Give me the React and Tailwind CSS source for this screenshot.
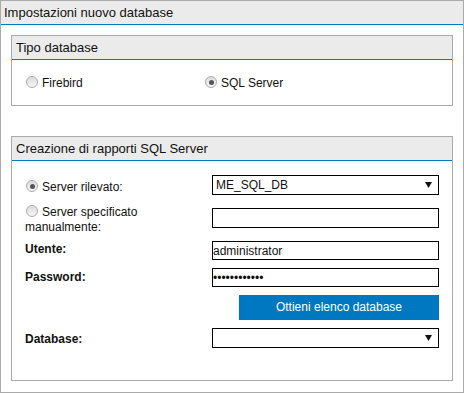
import { useState } from 'react';

function Radio({ checked }) {
  return (
    <span className="inline-flex align-top ml-[1px] mr-[4px] w-[12px] h-[12px] rounded-full border border-[#ababab] bg-gradient-to-b from-[#dcdcdc] to-[#f7f7f7] items-center justify-center">
      {checked && <span className="w-[5px] h-[5px] rounded-full bg-[#555]" />}
    </span>
  );
}

function Select({ value }) {
  return (
    <div className="relative h-full">
      <select
        className="appearance-none w-full h-full border border-black bg-white pl-[3px] text-[12px] text-[#111] outline-none"
        defaultValue={value}
      >
        <option value={value}>{value}</option>
      </select>
      <svg className="absolute right-[7px] top-1/2 -translate-y-1/2 pointer-events-none" width="7" height="6" viewBox="0 0 7 6">
        <polygon points="0,0 7,0 3.5,6" fill="#111" />
      </svg>
    </div>
  );
}

function Panel({ title, children, className = '' }) {
  return (
    <div className={`border border-[#aaaaaa] ${className}`}>
      <div className="h-[24px] bg-[#ebebeb] border-b border-[#0078c1] pl-[4px] text-[13px] leading-[23px] text-[#111]">
        {title}
      </div>
      {children}
    </div>
  );
}

export default function App() {
  const [tipo, setTipo] = useState('sql');
  const [server, setServer] = useState('rilevato');

  return (
    <div
      className="w-[464px] h-[393px] border border-[#aaaaaa] bg-white text-[#111]"
      style={{ fontFamily: '"Liberation Sans", Arial, sans-serif' }}
    >
      <div className="h-[24px] bg-[#ebebeb] border-b border-[#0078c1] pl-[3px] text-[13px] leading-[23px]">
        Impostazioni nuovo database
      </div>

      <div className="px-[10px] pt-[10px]">
        <Panel title="Tipo database">
          <div className="h-[45px] pt-[16px] pl-[13px] flex text-[12px] leading-[15px]">
            <label className="w-[179px] cursor-default" onClick={() => setTipo('firebird')}>
              <Radio checked={tipo === 'firebird'} />
              Firebird
            </label>
            <label className="cursor-default" onClick={() => setTipo('sql')}>
              <Radio checked={tipo === 'sql'} />
              SQL Server
            </label>
          </div>
        </Panel>

        <Panel title="Creazione di rapporti SQL Server" className="mt-[30px]">
          <div className="h-[219px] pl-[13px] pr-[13px] pt-[14px] text-[12px] leading-[15px]">
            <div className="flex h-[20px]">
              <label className="w-[187px] self-start mt-[5px]" onClick={() => setServer('rilevato')}>
                <Radio checked={server === 'rilevato'} />
                Server rilevato:
              </label>
              <div className="flex-1">
                <Select value="ME_SQL_DB" />
              </div>
            </div>

            <div className="flex h-[20px] mt-[13px]">
              <label className="w-[187px] pr-[12px] self-start -mt-[3px]" onClick={() => setServer('manuale')}>
                <Radio checked={server === 'manuale'} />
                Server specificato manualmente:
              </label>
              <input className="flex-1 min-w-0 h-full border border-black outline-none px-[1px] text-[12px]" />
            </div>

            <div className="flex items-center h-[19px] mt-[13px]">
              <span className="w-[187px] font-bold -mt-[2px]">Utente:</span>
              <input
                className="flex-1 min-w-0 h-full border border-black outline-none px-0 text-[12px] text-[#111]"
                defaultValue="administrator"
              />
            </div>

            <div className="flex items-center h-[19px] mt-[8px]">
              <span className="w-[187px] font-bold">Password:</span>
              <input
                type="password"
                className="flex-1 min-w-0 h-full border border-black outline-none px-0 text-[12px] text-[#111]"
                defaultValue="amministrat1"
              />
            </div>

            <div className="flex justify-end mt-[8px]">
              <button className="w-[200px] h-[25px] bg-[#0078c1] text-white text-[12px]">
                Ottieni elenco database
              </button>
            </div>

            <div className="flex items-center h-[20px] mt-[8px]">
              <span className="w-[187px] font-bold mt-[2px]">Database:</span>
              <div className="flex-1 h-full">
                <Select value="" />
              </div>
            </div>
          </div>
        </Panel>
      </div>
    </div>
  );
}
